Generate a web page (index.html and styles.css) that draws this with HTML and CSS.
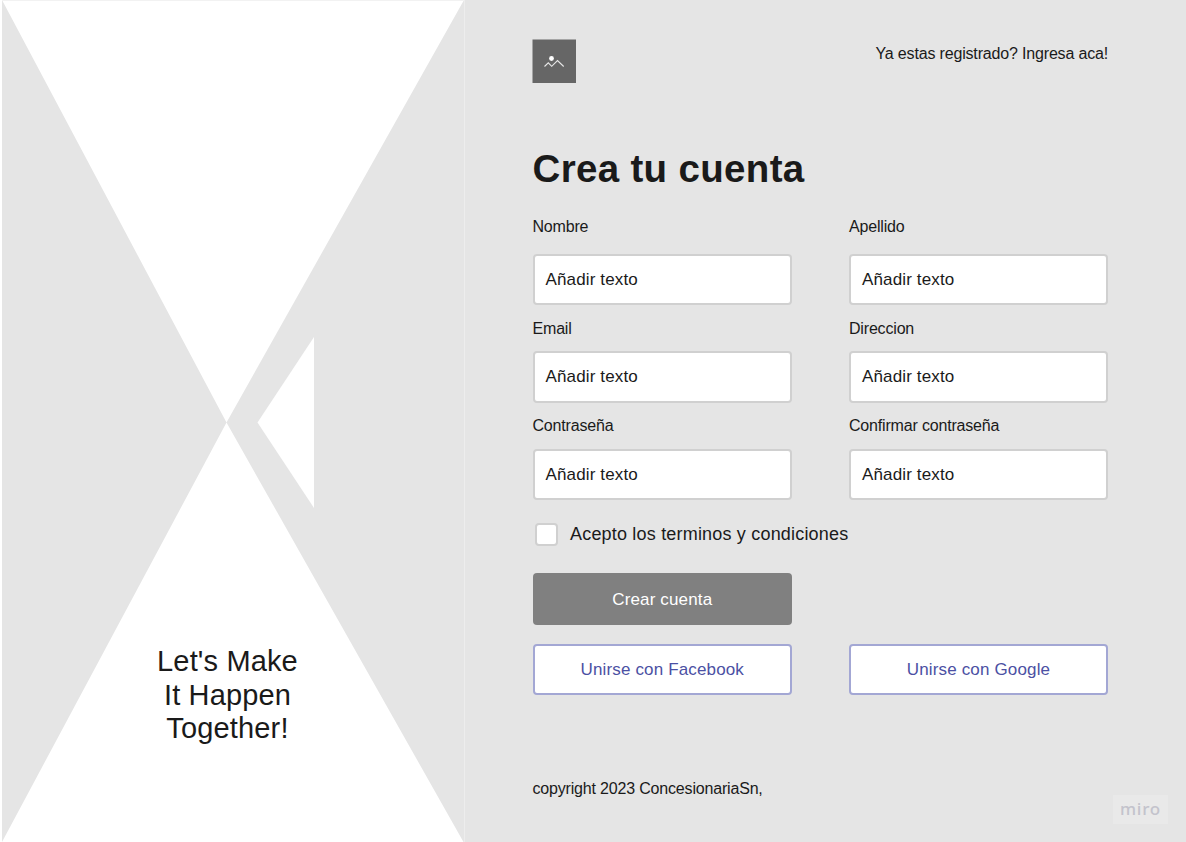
FILE: index.html
```html
<!DOCTYPE html>
<html lang="es">
<head>
<meta charset="utf-8">
<title>Crea tu cuenta</title>
<link rel="stylesheet" href="styles.css">
</head>
<body>
<main class="page">
  <aside class="hero">
    <svg class="hero-art" viewBox="0 0 465 842" aria-hidden="true">
      <path class="art-shape" d="M2 0L226.500 422.500L2 842ZM464 0L226.500 422.500L463.500 842H464Z"/>
      <path class="art-cut" d="M314 337V508L257.500 422.500Z"/>
      <path class="art-top" d="M2 .5H464"/>
    </svg>
    <p class="slogan">Let's Make<br>It Happen<br>Together!</p>
  </aside>
  <section class="panel">
    <header class="top">
      <svg class="logo" viewBox="0 0 44 44" aria-hidden="true">
        <rect class="logo-bg" x=".5" y=".5" width="43.500" height="43.500"/>
        <circle class="logo-sun" cx="19.500" cy="19.500" r="2.400"/>
        <path class="logo-hill" d="M12.500 27.500L16.300 23.800L19.700 27.300L25.500 21.500L31.700 27.500"/>
      </svg>
      <a class="login">Ya estas registrado? Ingresa aca!</a>
    </header>
    <h1 class="title">Crea tu cuenta</h1>
    <form class="form">
      <div class="field first"><span class="label">Nombre</span><div class="input">Añadir texto</div></div>
      <div class="field first"><span class="label">Apellido</span><div class="input">Añadir texto</div></div>
      <div class="field second"><span class="label">Email</span><div class="input">Añadir texto</div></div>
      <div class="field second"><span class="label">Direccion</span><div class="input">Añadir texto</div></div>
      <div class="field"><span class="label">Contraseña</span><div class="input">Añadir texto</div></div>
      <div class="field"><span class="label">Confirmar contraseña</span><div class="input">Añadir texto</div></div>
    </form>
    <div class="terms"><span class="check"></span><span class="terms-text">Acepto los terminos y condiciones</span></div>
    <div class="actions">
      <div class="btn primary">Crear cuenta</div>
      <div></div>
      <div class="btn social">Unirse con Facebook</div>
      <div class="btn social">Unirse con Google</div>
    </div>
    <footer class="copyright">copyright 2023 ConcesionariaSn,</footer>
  </section>
</main>
<div class="badge">miro</div>
</body>
</html>
```
FILE: styles.css
```css
* { box-sizing: border-box; }
body { margin: 0; background: #e5e5e5; color: #1a1a1a; font-family: "Liberation Sans", Arial, sans-serif; }
.page { display: grid; grid-template-columns: 465px 1fr; height: 842px; overflow: hidden; }
.hero { display: grid; background: #fff; border-right: 1px solid #ededed; }
.hero-art { grid-area: 1 / 1; width: 465px; height: 842px; }
.art-shape { fill: #e5e5e5; }
.art-cut { fill: #fff; }
.art-top { stroke: #f2f2f2; }
.slogan { grid-area: 1 / 1; margin: 645px 0 0; padding-right: 10px; text-align: center; font-size: 29px; line-height: 33.500px; letter-spacing: .15px; z-index: 1; }
.panel { padding: 39px 78.500px 0 67.500px; }
.top { display: flex; justify-content: space-between; height: 107px; }
.logo { width: 44px; height: 44px; margin-left: -.5px; }
.logo-bg { fill: #666; }
.logo-sun { fill: #fff; }
.logo-hill { fill: none; stroke: #e8e8e8; stroke-width: 1.1; }
.login { font-size: 16px; line-height: 20px; padding-top: 5px; letter-spacing: -.17px; }
.title { margin: 0; font-size: 38.500px; line-height: 46px; letter-spacing: .33px; }
.form { display: grid; grid-template-columns: 259.500px 259px; column-gap: 57px; padding-top: 25px; }
.field { display: flex; flex-direction: column; justify-content: space-between; height: 84px; margin-bottom: 11.500px; }
.field.first { height: 88px; margin-bottom: 14px; }
.field.second { height: 83.500px; margin-bottom: 13.500px; }
.label { font-size: 16px; line-height: 20px; letter-spacing: -.18px; }
.field .input { display: flex; align-items: center; height: 51.500px; padding: 1px 11px 0; background: #fff; border: 2px solid #d0d0d0; border-radius: 4px; font-size: 17px; letter-spacing: .14px; }
.terms { display: flex; align-items: center; gap: 12px; height: 24px; margin-top: 11px; padding-left: 2.500px; }
.check { width: 23px; height: 23px; background: #fff; border: 2px solid #d0d0d0; border-radius: 4px; }
.terms-text { font-size: 18px; letter-spacing: .19px; }
.actions { display: grid; grid-template-columns: 259.500px 259px; gap: 19px 57px; margin-top: 26.500px; }
.btn { display: flex; align-items: center; justify-content: center; height: 52px; padding-top: 1px; border-radius: 4px; font-size: 17px; letter-spacing: .15px; }
.primary { background: #808080; color: #fff; }
.social { height: 51px; background: #fff; border: 2px solid #a3a7d4; color: #4b50a3; }
.copyright { margin-top: 84px; font-size: 16px; line-height: 20px; letter-spacing: -.18px; }
.badge { position: absolute; left: 1113px; top: 795px; width: 55px; height: 29px; background: #e9e9e9; color: #c3c3cc; text-align: center; font: 600 17px/27px "Noto Sans", sans-serif; font-weight: 500; letter-spacing: .8px; }
```
